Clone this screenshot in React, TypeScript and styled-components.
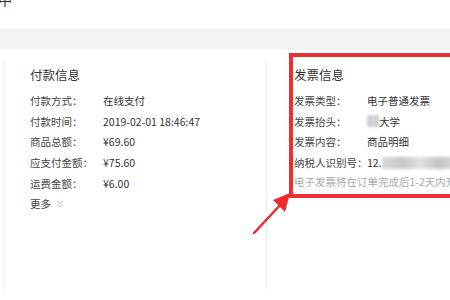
import React from "react";
import styled, { createGlobalStyle } from "styled-components";

const Global = createGlobalStyle`
  html, body { margin: 0; padding: 0; background: #fff; }
  body { font-family: "Noto Sans CJK SC", "Noto Sans", sans-serif; }
`;

const Page = styled.div`
  position: relative;
  width: 450px;
  height: 300px;
  overflow: hidden;
  background: #fff;
`;

const TopBar = styled.div`
  height: 28px;
  overflow: hidden;
`;

const TopText = styled.div`
  font-size: 14px;
  line-height: 16px;
  margin-top: -9px;
  margin-left: -2px;
  color: #333;
`;

const Band = styled.div`
  height: 22px;
  background: #f3f3f3;
  border-top: 1px solid #f7f7f7;
  border-bottom: 1px solid #f7f7f7;
  box-sizing: border-box;
`;

const Columns = styled.div`
  display: flex;
  padding-top: 10px;
  height: 240px;
  box-sizing: border-box;
`;

const Panel = styled.div<{ $width?: number; $pad: number; $ml?: number }>`
  ${(p) => (p.$width ? `width: ${p.$width}px; flex: none;` : "flex: 1;")}
  margin-left: ${(p) => p.$ml ?? 0}px;
  padding-left: ${(p) => p.$pad}px;
  padding-top: 5px;
  border-left: 1px solid #f0f0f0;
  box-sizing: border-box;
  white-space: nowrap;
  overflow: visible;
`;

const Heading = styled.div`
  font-size: 12.5px;
  line-height: 20px;
  height: 20px;
  color: #333;
  margin-bottom: 5px;
`;

const Row = styled.div`
  display: flex;
  align-items: center;
  height: 20.8px;
  font-size: 10.5px;
  color: #333;
`;

const Label = styled.span`
  width: 73px;
  flex: none;
  color: #444;
`;

const Value = styled.span`
  display: flex;
  align-items: center;
  color: #333;
`;

const Note = styled.div`
  font-size: 10.5px;
  line-height: 18px;
  color: #aaa;
  white-space: nowrap;
`;

const More = styled.div`
  display: flex;
  align-items: center;
  gap: 5px;
  height: 20px;
  font-size: 10.5px;
  color: #444;
`;

const Blur = styled.span<{ $w: number }>`
  display: inline-block;
  width: ${(p) => p.$w}px;
  height: 12px;
  background: linear-gradient(90deg, #d8d8d8 0%, #c8c8c8 30%, #e0e0e0 55%, #c4c4c4 80%, #d4d4d4 100%);
  filter: blur(1.5px);
`;

const RedBox = styled.div`
  position: absolute;
  left: 289px;
  top: 53px;
  width: 200px;
  height: 145px;
  border: 4px solid #ef2e30;
  box-sizing: border-box;
  pointer-events: none;
`;

const Arrow = styled.svg`
  position: absolute;
  left: 245px;
  top: 185px;
`;

const Chevrons = () => (
  <svg width="8" height="8" viewBox="0 0 8 8">
    <path d="M1 1 L4 3.5 L7 1 M1 4.5 L4 7 L7 4.5" fill="none" stroke="#bbb" strokeWidth="1" />
  </svg>
);

export default function App() {
  return (
    <>
      <Global />
      <Page>
        <TopBar>
          <TopText>中</TopText>
        </TopBar>
        <Band />
        <Columns>
          <Panel $width={262} $pad={25} $ml={4}>
            <Heading>付款信息</Heading>
            <Row><Label>付款方式：</Label><Value>在线支付</Value></Row>
            <Row><Label>付款时间：</Label><Value>2019-02-01 18:46:47</Value></Row>
            <Row><Label>商品总额：</Label><Value>¥69.60</Value></Row>
            <Row><Label>应支付金额：</Label><Value>¥75.60</Value></Row>
            <Row><Label>运费金额：</Label><Value>¥6.00</Value></Row>
            <More>更多<Chevrons /></More>
          </Panel>
          <Panel $pad={27}>
            <Heading>发票信息</Heading>
            <Row><Label>发票类型：</Label><Value>电子普通发票</Value></Row>
            <Row><Label>发票抬头：</Label><Value><Blur $w={12} />大学</Value></Row>
            <Row><Label>发票内容：</Label><Value>商品明细</Value></Row>
            <Row><Label>纳税人识别号：</Label><Value>12.<Blur $w={70} /></Value></Row>
            <Note>电子发票将在订单完成后1-2天内开具</Note>
          </Panel>
        </Columns>
        <RedBox />
        <Arrow width="50" height="55" viewBox="0 0 50 55">
          <path d="M9 48 L38 17" stroke="#f02a2d" strokeWidth="2.5" strokeLinecap="round" />
          <path d="M45 8 L28 15 L40 27 Z" fill="#f02a2d" />
        </Arrow>
      </Page>
    </>
  );
}
